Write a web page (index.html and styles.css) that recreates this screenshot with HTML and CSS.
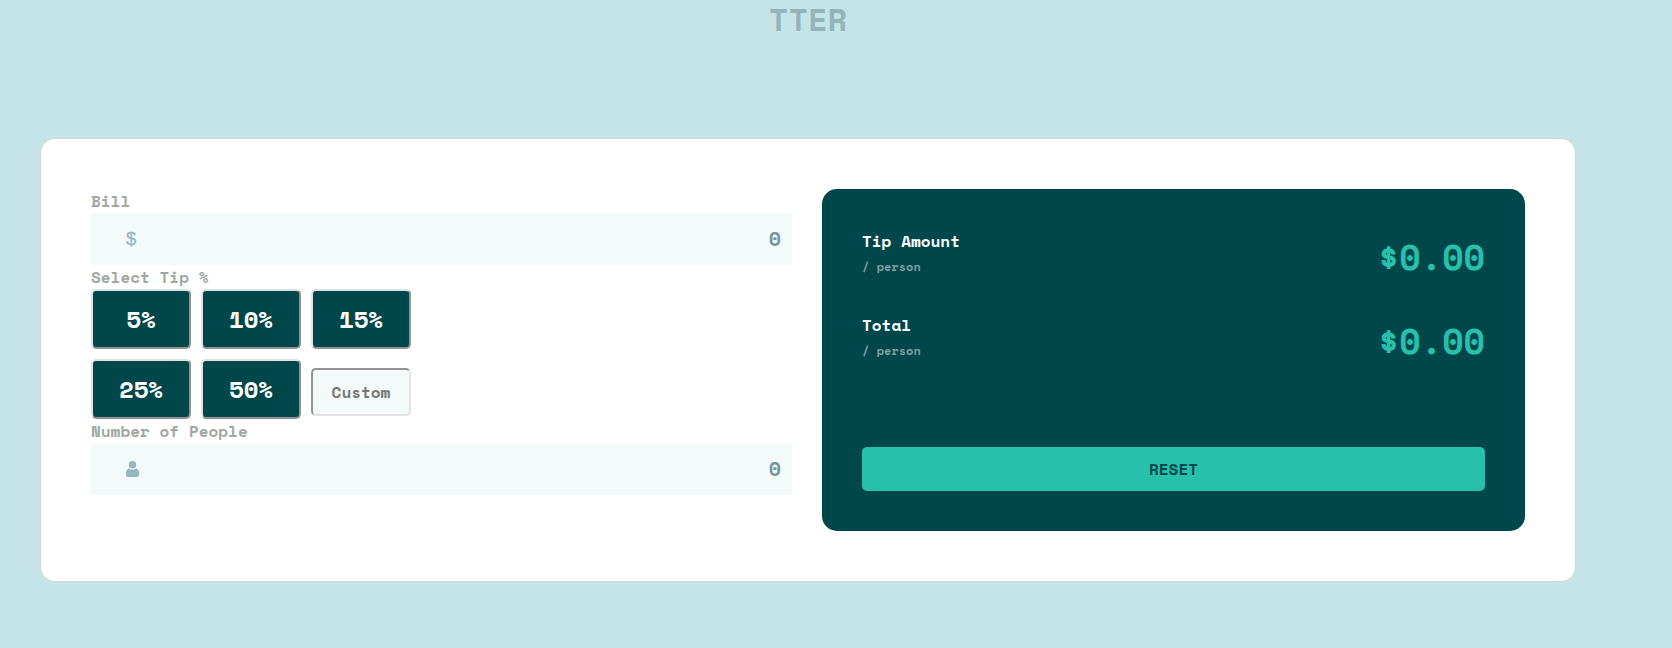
FILE: index.html
```html
<!DOCTYPE html>
<html lang="en">
<head>
<meta charset="utf-8">
<title>Tip calculator</title>
<link rel="stylesheet" href="styles.css">
</head>
<body>
<h1 class="title">TTER</h1>
<main class="card">
  <form class="form">
    <label class="label" for="bill">Bill</label>
    <div class="field">
      <span class="dollar">$</span>
      <input class="field-input" id="bill" type="text" placeholder="0">
    </div>
    <span class="label">Select Tip %</span>
    <div class="tips">
      <button class="tip" type="button">5%</button>
      <button class="tip" type="button">10%</button>
      <button class="tip" type="button">15%</button>
      <button class="tip" type="button">25%</button>
      <button class="tip" type="button">50%</button>
      <input class="custom" type="text" placeholder="Custom">
    </div>
    <label class="label" for="people">Number of People</label>
    <div class="field">
      <svg class="person" width="13" height="16" viewBox="0 0 13 16"><circle cx="6.5" cy="3.8" r="3.7"/><path d="M3 7.6Q6.5 10 10 7.6C12 7.8 13 9.6 13 12V13.5Q13 16 10.5 16H2.5Q0 16 0 13.5V12C0 9.6 1 7.8 3 7.6Z"/></svg>
      <input class="field-input" id="people" type="text" placeholder="0">
    </div>
  </form>
  <section class="panel">
    <div class="row">
      <div><div class="name">Tip Amount</div><div class="per">/ person</div></div>
      <div class="amount">$0.00</div>
    </div>
    <div class="row">
      <div><div class="name">Total</div><div class="per">/ person</div></div>
      <div class="amount">$0.00</div>
    </div>
    <button class="reset" type="button">RESET</button>
  </section>
</main>
</body>
</html>
```
FILE: styles.css
```css
* { box-sizing: border-box; }

body {
  margin: 0;
  height: 648px;
  overflow: hidden;
  background: #c5e4e7;
  font-family: "Space Mono", "Liberation Mono", monospace;
  font-weight: 700;
}

.title {
  width: 1536px;
  height: 138px;
  margin: 0 0 0 40px;
  text-align: center;
  font-size: 32px;
  line-height: 38px;
  color: #93b5b9;
}

.card {
  display: flex;
  gap: 30px;
  width: 1536px;
  height: 444px;
  margin-left: 40px;
  padding: 50px;
  border: 1px solid #d3d3d3;
  border-radius: 15px;
  background: #fff;
}

.form { width: 701px; }

.label {
  display: block;
  height: 24px;
  font-size: 16px;
  line-height: 24px;
  color: #a1a8a4;
}

.field {
  display: flex;
  align-items: center;
  height: 52px;
  padding: 0 11px 0 35px;
  background: #f4fafa;
}

.dollar {
  width: 13px;
  font: 400 18.5px/52px "Liberation Sans", sans-serif;
  -webkit-text-stroke: 0.3px #93b8be;
  color: #93b8be;
}

.person { fill: #93b8be; }

.field-input {
  flex: 1;
  min-width: 0;
  height: 52px;
  padding: 0 0 2px;
  border: 0;
  background: none;
  text-align: right;
  font: 700 20px "Space Mono", "Liberation Mono", monospace;
}

.field-input::placeholder { color: #75979b; }

.tips {
  display: grid;
  grid-template-columns: repeat(3, 100px);
  grid-auto-rows: 60px;
  gap: 10px;
}

.tip {
  padding: 0;
  border: 2px solid;
  border-color: #e2e2e2 #939393 #939393 #e2e2e2;
  border-radius: 5px;
  background: #00474b;
  color: #fff;
  font: 700 24px "Space Mono", "Liberation Mono", monospace;
}

.custom {
  width: 100px;
  height: 48px;
  margin-top: 9px;
  padding: 0;
  border: 2px solid;
  border-color: #939393 #e2e2e2 #e2e2e2 #939393;
  border-radius: 5px;
  background: #f4fafa;
  text-align: center;
  font: 700 16px "Space Mono", "Liberation Mono", monospace;
}

.custom::placeholder { color: #757875; }

.panel {
  display: flex;
  flex-direction: column;
  width: 703px;
  height: 342px;
  padding: 40px;
  border-radius: 15px;
  background: #00474b;
}

.row {
  display: flex;
  justify-content: space-between;
  height: 84px;
}

.name {
  height: 24px;
  font-size: 16px;
  line-height: 24px;
  color: #fff;
}

.per {
  font-size: 12px;
  line-height: 27px;
  color: #7f9ea1;
}

.amount {
  font-size: 35px;
  line-height: 56px;
  color: #26c0ab;
}

.reset {
  height: 44px;
  margin-top: auto;
  padding: 0;
  border: 0;
  border-radius: 5px;
  background: #26c0ab;
  color: #00474b;
  font: 700 16px "Space Mono", "Liberation Mono", monospace;
}
```
